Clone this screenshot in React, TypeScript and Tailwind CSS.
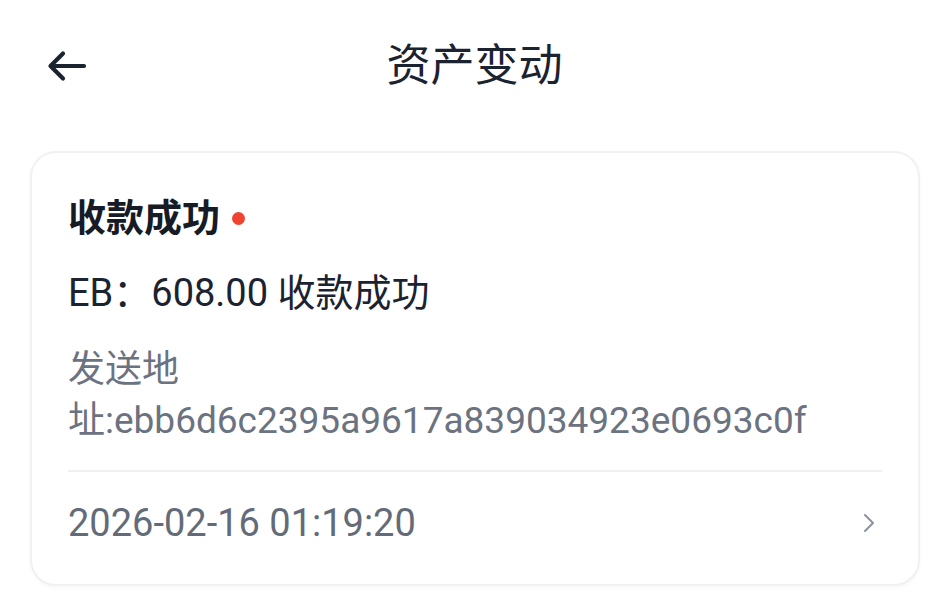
import React from "react";

const BackArrow: React.FC = () => (
  <svg width="40" height="32" viewBox="0 0 40 32" fill="none">
    <path
      d="M37 16H4M16 3.5L3.5 16L16 28.5"
      stroke="#1b2230"
      strokeWidth="4.2"
      strokeLinecap="round"
      strokeLinejoin="round"
    />
  </svg>
);

const Chevron: React.FC = () => (
  <svg width="14" height="22" viewBox="0 0 14 22" fill="none">
    <path
      d="M3 3l8 8-8 8"
      stroke="#8b929c"
      strokeWidth="2"
      strokeLinecap="round"
      strokeLinejoin="round"
    />
  </svg>
);

const App: React.FC = () => {
  return (
    <div
      className="min-h-screen w-full bg-white"
      style={{ fontFamily: 'Roboto, "Noto Sans CJK SC", sans-serif' }}
    >
      {/* header */}
      <header className="grid h-[100px] grid-cols-[1fr_auto_1fr] items-center pt-4 box-content">
        <div className="pl-[47px]">
          <BackArrow />
        </div>
        <h1 className="text-[44px] leading-none text-[#1b2230] pl-[2px]">资产变动</h1>
        <div />
      </header>

      {/* record card */}
      <div className="ml-[30px] mt-[35px] w-[890px] rounded-[26px] border-2 border-[#eff1f3] bg-white px-[36px] pt-[40px] pb-[36px] shadow-[0_2px_4px_rgba(0,0,0,0.03)]">
        <div className="flex items-center gap-[12px]">
          <span className="text-[38px] font-bold leading-[50px] text-[#161b26]">收款成功</span>
          <span className="h-[13px] w-[13px] rounded-full bg-[#ee4434]" />
        </div>
        <p className="mt-[25px] text-[38px] leading-[50px] text-[#1b2230]">EB：608.00 收款成功</p>
        <p className="mt-[26px] text-[37px] leading-[51px] text-[#6b7280]">
          发送地址:ebb6d6c2395a9617a839034923e0693c0f
        </p>
        <div className="mt-[24px] h-[2px] bg-[#eef0f2]" />
        <div className="mt-[26px] flex items-center justify-between">
          <span className="text-[38px] leading-[50px] text-[#636b78]">2026-02-16 01:19:20</span>
          <span className="pr-[6px]">
            <Chevron />
          </span>
        </div>
      </div>
    </div>
  );
};

export default App;
